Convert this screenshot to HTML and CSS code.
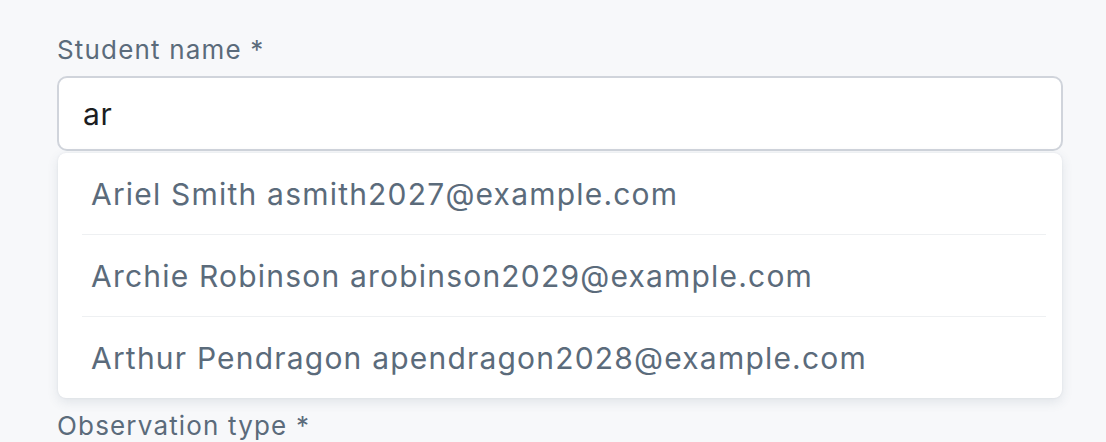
FILE: index.html
```html
<!DOCTYPE html>
<html lang="en">
<head>
<meta charset="utf-8">
<link rel="stylesheet" href="styles.css">
</head>
<body>
<div class="form">
  <div class="field">
    <label class="label" for="student">Student name *</label>
    <div class="combo">
      <input id="student" class="input" type="text" value="ar">
      <ul class="menu">
        <li class="option">Ariel Smith asmith2027@example.com</li>
        <li class="option">Archie Robinson arobinson2029@example.com</li>
        <li class="option">Arthur Pendragon apendragon2028@example.com</li>
      </ul>
    </div>
  </div>
  <div class="field field-next">
    <label class="label">Observation type *</label>
  </div>
</div>
</body>
</html>
```
FILE: styles.css
```css
html, body {
  margin: 0;
  padding: 0;
  background: #f7f8fa;
}
body {
  font-family: Inter, "Open Sans", "Liberation Sans", sans-serif;
}
.form {
  padding: 32px 43px 0 57px;
}
.field {
  display: flex;
  flex-direction: column;
}
.label {
  font-size: 26px;
  line-height: 36px;
  letter-spacing: 0.045em;
  color: #5b6b7b;
  margin-bottom: 8px;
}
.combo {
  position: relative;
}
.input {
  box-sizing: border-box;
  width: 100%;
  height: 75px;
  border: 2px solid #d0d4db;
  border-radius: 10px;
  background: #fff;
  padding: 0 24px;
  font-family: inherit;
  font-size: 30px;
  letter-spacing: 0.02em;
  color: #1b1d21;
  outline: none;
}
.menu {
  position: absolute;
  top: calc(100% + 2px);
  left: 1px;
  right: 1px;
  margin: 0;
  padding: 0 16px 0 24px;
  list-style: none;
  background: #fff;
  border-radius: 8px;
  box-shadow: 0 4px 12px rgba(60, 80, 110, 0.12), 0 0 2px rgba(60, 80, 110, 0.1);
}
.option {
  height: 81px;
  display: flex;
  align-items: center;
  padding: 0 9px;
  font-size: 30px;
  letter-spacing: 0.04em;
  color: #5b6b7b;
  border-bottom: 1px solid #eef0f2;
}
.option:last-child {
  border-bottom: none;
}
.field-next {
  margin-top: 257px;
}
```
